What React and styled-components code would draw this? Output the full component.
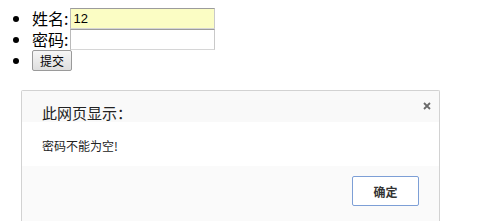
import React from 'react';
import styled, { createGlobalStyle } from 'styled-components';

const GlobalStyle = createGlobalStyle`
  html, body {
    margin: 0;
    padding: 0;
    background: #ffffff;
  }
  body {
    font-family: "Liberation Sans", "Noto Sans CJK SC", sans-serif;
    color: #000;
  }
`;

const FormList = styled.ul`
  margin: 0;
  padding: 8px 0 0 32px;
  list-style: disc outside;
`;

const Row = styled.li`
  height: 21px;
  line-height: 21px;
  font-size: 16px;
  font-family: "Noto Sans CJK SC", sans-serif;

  & > * {
    vertical-align: top;
  }
`;

const Label = styled.span`
  display: inline-block;
  padding-right: 2px;
  line-height: 20px;
`;

const Field = styled.input`
  box-sizing: border-box;
  width: 145px;
  height: 21px;
  margin: 0;
  padding: 0 2px;
  border: 1px solid;
  border-color: #9c9c9c #c9c9c9 #d6d6d6 #bababa;
  background: ${({ $filled }) => ($filled ? '#fbfdc4' : '#ffffff')};
  font-family: "Liberation Sans", sans-serif;
  font-size: 13px;
  color: #000;
  outline: none;
`;

const SubmitButton = styled.button`
  box-sizing: border-box;
  width: 40px;
  height: 21px;
  margin: 0;
  padding: 0;
  border: 1px solid #9a9a9a;
  border-radius: 2px;
  background: linear-gradient(#f6f6f6, #dedede);
  font-family: "Noto Sans CJK SC", sans-serif;
  font-size: 12px;
  line-height: 18px;
  color: #000;
`;

const Dialog = styled.div`
  box-sizing: border-box;
  width: 419px;
  margin: 19px 0 0 21px;
  border: 1px solid #d2d2d2;
  border-bottom: none;
  border-radius: 2px 2px 0 0;
  font-family: "Noto Sans CJK SC", sans-serif;
  overflow: hidden;
`;

const DialogHeader = styled.div`
  display: flex;
  justify-content: space-between;
  align-items: flex-start;
  padding: 13px 8px 0 20px;
  background: #f9f9f9;
`;

const Title = styled.div`
  font-size: 15px;
  line-height: 18px;
  color: #222;
`;

const Close = styled.div`
  margin-top: -2px;
  width: 8px;
  height: 8px;
  display: flex;
`;

const DialogBody = styled.div`
  padding: 16px 20px 12px 20px;
  background: #ffffff;
  font-size: 12px;
  line-height: 16px;
  color: #222;
`;

const DialogFooter = styled.div`
  display: flex;
  justify-content: flex-end;
  padding: 10px 20px 20px;
  background: #fafafa;
`;

const OkButton = styled.button`
  box-sizing: border-box;
  width: 67px;
  height: 30px;
  margin: 0;
  padding: 0;
  border: 1px solid #7d9fd6;
  border-radius: 2px;
  background: #ffffff;
  font-family: "Noto Sans CJK SC", sans-serif;
  font-size: 12px;
  font-weight: bold;
  color: #333;
`;

export default function App() {
  return (
    <>
      <GlobalStyle />
      <FormList>
        <Row>
          <Label>姓名:</Label>
          <Field $filled defaultValue="12" />
        </Row>
        <Row>
          <Label>密码:</Label>
          <Field type="password" />
        </Row>
        <Row>
          <SubmitButton>提交</SubmitButton>
        </Row>
      </FormList>
      <Dialog>
        <DialogHeader>
          <Title>此网页显示：</Title>
          <Close>
            <svg width="8" height="8" viewBox="0 0 8 8">
              <path d="M1 1 L7 7 M7 1 L1 7" stroke="#6a6a6a" strokeWidth="1.8" />
            </svg>
          </Close>
        </DialogHeader>
        <DialogBody>密码不能为空!</DialogBody>
        <DialogFooter>
          <OkButton>确定</OkButton>
        </DialogFooter>
      </Dialog>
    </>
  );
}
